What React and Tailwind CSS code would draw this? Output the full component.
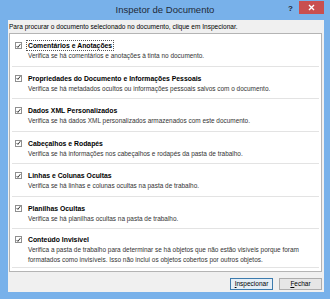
import React from "react";

const items = [
  {
    title: "Comentários e Anotações",
    desc: ["Verifica se há comentários e anotações à tinta no documento."],
    focus: true,
  },
  {
    title: "Propriedades do Documento e Informações Pessoais",
    desc: ["Verifica se há metadados ocultos ou informações pessoais salvos com o documento."],
  },
  {
    title: "Dados XML Personalizados",
    desc: ["Verifica se há dados XML personalizados armazenados com este documento."],
  },
  {
    title: "Cabeçalhos e Rodapés",
    desc: ["Verifica se há informações nos cabeçalhos e rodapés da pasta de trabalho."],
  },
  {
    title: "Linhas e Colunas Ocultas",
    desc: ["Verifica se há linhas e colunas ocultas na pasta de trabalho."],
  },
  {
    title: "Planilhas Ocultas",
    desc: ["Verifica se há planilhas ocultas na pasta de trabalho."],
  },
  {
    title: "Conteúdo Invisível",
    desc: [
      "Verifica a pasta de trabalho para determinar se há objetos que não estão visíveis porque foram",
      "formatados como invisíveis. Isso não inclui os objetos cobertos por outros objetos.",
    ],
  },
];

function Check() {
  return (
    <span className="w-[7px] h-[7px] border border-[#8f8f8f] bg-white flex items-center justify-center shrink-0">
      <svg width="6" height="6" viewBox="0 0 6 6">
        <path d="M0.8 3.1 L2.3 4.7 L5.2 0.8" fill="none" stroke="#222" strokeWidth="1.1" />
      </svg>
    </span>
  );
}

function Section({ item, last }) {
  return (
    <div
      className={
        last
          ? "mx-[2px] pt-[5px] pb-[3px] border-b border-[#e3e3e3]"
          : "mx-[2px] pt-[6px] pb-[4.5px] border-b border-[#e3e3e3]"
      }
    >
      <div className="flex items-center h-[11px] pl-[3px] gap-[5px]">
        <Check />
        <span
          className={
            item.focus
              ? "font-bold text-black text-[6.85px] leading-[9px] px-[1px] outline outline-1 outline-dotted outline-[#555]"
              : "font-bold text-black text-[6.85px] leading-[9px] px-[1px]"
          }
        >
          {item.title}
        </span>
      </div>
      {item.desc.map((d, i) => (
        <div
          key={i}
          className={
            last
              ? "pl-[16px] text-[6.45px] leading-[9.5px] text-[#333]"
              : "pl-[16px] text-[6.45px] leading-[10px] text-[#333]"
          }
        >
          {d}
        </div>
      ))}
    </div>
  );
}

export default function App() {
  return (
    <div
      className="w-[330px] h-[299px] bg-[#78b1ea] flex flex-col overflow-hidden"
      style={{ fontFamily: '"Liberation Sans", Arial, sans-serif' }}
    >
      <div className="h-[20px] grid grid-cols-[1fr_auto_1fr] items-center">
        <div />
        <div className="text-[9.5px] text-[#1e2a38] pt-[1px]">Inspetor de Documento</div>
        <div className="flex justify-end items-start h-full pr-[6px]">
          <span className="text-[8px] font-bold text-[#1e2a38] mt-[3px] mr-[6px]">?</span>
          <div className="w-[25px] h-[13px] mt-[1px] bg-[#c94f4f] flex items-center justify-center">
            <svg width="7" height="7" viewBox="0 0 7 7">
              <path d="M1 1 L6 6 M6 1 L1 6" stroke="#fff" strokeWidth="1.4" />
            </svg>
          </div>
        </div>
      </div>

      <div className="flex-1 ml-[8px] mr-[6px] mb-[7px] bg-[#f0f0f0] flex flex-col">
        <div className="h-[13px] leading-[13px] pl-[1px] text-[6.55px] text-black">
          Para procurar o documento selecionado no documento, clique em Inspecionar.
        </div>
        <div className="ml-[1px] mr-[2px] h-[239px] bg-white border border-[#b4b4b4]">
          {items.map((it, i) => (
            <Section key={i} item={it} last={i === items.length - 1} />
          ))}
        </div>
        <div className="flex justify-end gap-[6px] pr-[2px] pt-[6px]">
          <button className="w-[43px] h-[12px] border border-[#3d7bad] bg-[#e5eef6] text-[6.5px] leading-[10px] text-black">
            <span className="underline">I</span>nspecionar
          </button>
          <button className="w-[43px] h-[12px] border border-[#adadad] bg-[#e6e6e6] text-[6.5px] leading-[10px] text-black">
            <span className="underline">F</span>echar
          </button>
        </div>
      </div>
    </div>
  );
}
